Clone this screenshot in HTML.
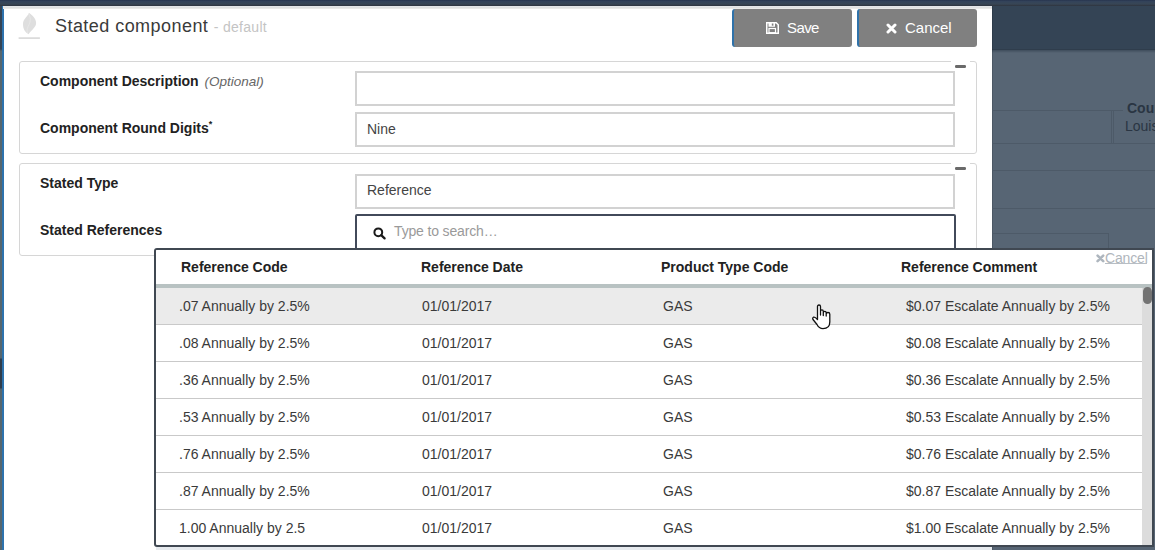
<!DOCTYPE html>
<html><head><meta charset="utf-8">
<style>
*{box-sizing:border-box;margin:0;padding:0}
html,body{width:1155px;height:550px;overflow:hidden}
body{position:relative;background:#576574;font-family:"Liberation Sans",sans-serif;color:#333}
.a{position:absolute}
/* background */
#topband{left:0;top:0;width:1155px;height:6px;background:linear-gradient(#27354f 0px,#33435a 1.5px,#384655 4px,#2e343e 6px)}
#bgdark{left:992px;top:6px;width:163px;height:44px;background:#344455}
#leftstrip{left:0;top:6px;width:2px;height:544px;background:linear-gradient(#344455 0px,#344455 43px,#56666e 45px,#56666e 352px,#2f3d4c 353px,#2f3d4c 382px,#56666e 383px)}
#bluestrip{left:2px;top:6px;width:2px;height:544px;background:#2d72ad}
#modal{left:4px;top:6px;width:988px;height:544px;background:#fff}
#modaltop{left:3px;top:6px;width:989px;height:3px;background:linear-gradient(#e6e9ec 0px,#dedede 2px,#f6f6f2 3px)}
.bgline{background:#4d5a68}
/* header */
#title{left:55px;top:15.5px;font-size:18px;color:#3a3a3a;white-space:nowrap;letter-spacing:0.45px}
#title small{font-size:14px;color:#c4c4c4;letter-spacing:0.3px}
.btn{top:9px;height:38px;background:#808080;border-radius:3px;border-left:2px solid #2f72aa;color:#fff;font-size:15px;text-align:center;line-height:38px;white-space:nowrap}
/* panels */
.panel{border:1px solid #d6d6d6;border-radius:3px;background:#fff}
.lbl{font-size:14px;font-weight:bold;color:#222;white-space:nowrap}
.inp{border:2px solid #d2d2d2;background:#fff;font-size:14px;color:#444;padding-left:10px;white-space:nowrap}
.minus{width:11px;height:2.5px;background:#6a6a6a;border-radius:1.2px}
/* dropdown */
#dd{left:154px;top:248px;width:1000px;height:299px;border:2px solid #404852;border-radius:3px 0 0 3px;background:#fff;overflow:hidden}
.th{font-size:14px;font-weight:bold;color:#222;white-space:nowrap;top:9px}
.row{left:0;width:986px;height:37px;border-bottom:1px solid #c9c9c9}
.td{font-size:14px;color:#3a3a3a;white-space:nowrap;top:10px}
</style></head><body>
<div class="a" id="topband"></div>
<div class="a" id="bgdark"></div>
<div class="a" id="leftstrip"></div>
<div class="a" id="bluestrip"></div>
<div class="a" id="modal"></div>
<div class="a" id="modaltop"></div>
<div class="a" style="left:992px;top:49px;width:163px;height:1px;background:#2f3d4c"></div>
<div class="a" style="left:992px;top:50px;width:163px;height:3px;background:linear-gradient(#3f4d5c,#576574)"></div>
<div class="a" style="left:992px;top:6px;width:1px;height:544px;background:rgba(0,0,0,0.12)"></div>

<!-- background lines on right -->
<div class="a bgline" style="left:992px;top:110px;width:131px;height:1px"></div>
<div class="a bgline" style="left:992px;top:143px;width:163px;height:1px"></div>
<div class="a bgline" style="left:1111px;top:110px;width:1px;height:33px"></div>
<div class="a bgline" style="left:1113px;top:110px;width:1px;height:33px"></div>
<div class="a bgline" style="left:992px;top:170px;width:163px;height:1px"></div>
<div class="a bgline" style="left:992px;top:208px;width:163px;height:1px"></div>
<div class="a bgline" style="left:992px;top:233px;width:116px;height:1px"></div>
<div class="a bgline" style="left:1108px;top:233px;width:1px;height:16px"></div>
<div class="a" style="left:1127px;top:100px;font-size:14px;font-weight:bold;color:#2a3543;white-space:nowrap">Country</div>
<div class="a" style="left:1125px;top:118px;font-size:14px;color:#2a3543;white-space:nowrap">Louisiana</div>

<!-- logo -->
<svg class="a" style="left:14px;top:8px" width="30" height="34" viewBox="0 0 30 34">
  <path d="M15.1 4.9C18 7 22 10 22.1 15C22.2 19 18 21.5 14.5 26.2C11 24 9 21 9 16C9 11 13 9 15.1 4.9Z" fill="#dedede"/>
  <path d="M14.5 5.5C15.5 8 17 10 16 14C15 18 12 20 13.5 25" fill="none" stroke="#e8e8e8" stroke-width="0.8"/>
  <rect x="4.6" y="29.3" width="21.3" height="1.6" fill="#d8d8d8"/>
</svg>

<div class="a" id="title">Stated component <small>- default</small></div>

<div class="a btn" style="left:732px;width:120px"></div>
<svg class="a" style="left:766px;top:22px" width="13" height="12" viewBox="0 0 13 12"><path d="M0.75 0.75H10.2L12.25 2.8V11.25H0.75Z" fill="none" stroke="#fff" stroke-width="1.5"/><rect x="2.5" y="0.75" width="6.5" height="4" fill="#fff"/><rect x="5.8" y="1.5" width="1.6" height="2.2" fill="#808080"/><rect x="3" y="6.5" width="6.5" height="4.2" fill="none" stroke="#fff" stroke-width="1.2"/></svg>
<div class="a" style="left:787px;top:19px;font-size:15px;color:#fff;white-space:nowrap;letter-spacing:-0.6px">Save</div>
<div class="a btn" style="left:857px;width:120px"></div>
<svg class="a" style="left:886px;top:23px" width="11" height="11" viewBox="0 0 11 11"><path d="M2 2L9 9M9 2L2 9" stroke="#fff" stroke-width="3" stroke-linecap="round"/></svg>
<div class="a" style="left:905px;top:19px;font-size:15px;color:#fff;white-space:nowrap">Cancel</div>

<!-- panel 1 -->
<div class="a panel" style="left:19px;top:61px;width:958px;height:93px"></div>
<div class="a" style="left:951px;top:60px;width:19px;height:3px;background:#fff"></div>
<div class="a minus" style="left:955px;top:65px"></div>
<div class="a lbl" style="left:40px;top:72.5px">Component Description <i style="font-weight:normal;font-size:13.5px;color:#666;margin-left:2px">(Optional)</i></div>
<div class="a lbl" style="left:40px;top:119px">Component Round Digits<sup style="font-size:9px">*</sup></div>
<div class="a inp" style="left:355px;top:71px;width:600px;height:35px"></div>
<div class="a inp" style="left:355px;top:112px;width:600px;height:35px;line-height:30px">Nine</div>

<!-- panel 2 -->
<div class="a panel" style="left:19px;top:163px;width:958px;height:93px"></div>
<div class="a" style="left:951px;top:162px;width:19px;height:3px;background:#fff"></div>
<div class="a minus" style="left:955px;top:167px"></div>
<div class="a lbl" style="left:40px;top:174.5px">Stated Type</div>
<div class="a lbl" style="left:40px;top:221.5px">Stated References</div>
<div class="a inp" style="left:355px;top:174px;width:600px;height:35px;line-height:29px">Reference</div>
<div class="a inp" style="left:355px;top:214px;width:601px;height:41px;border-color:#424a5a;border-radius:2px;color:#9a9a9a;padding-left:37px;line-height:30px;letter-spacing:-0.15px">Type to search&#8230;</div>
<svg class="a" style="left:373px;top:227px" width="14" height="14" viewBox="0 0 14 14"><circle cx="5.3" cy="5.3" r="3.9" fill="none" stroke="#1a1a1a" stroke-width="2"/><line x1="8.2" y1="8.2" x2="11.6" y2="11.4" stroke="#1a1a1a" stroke-width="2.3" stroke-linecap="round"/></svg>

<!-- bottom light band -->
<div class="a" style="left:156px;top:547px;width:836px;height:3px;background:#e6eaee"></div>

<!-- dropdown -->
<div class="a" id="dd">
  <div class="a" style="left:0;top:0;width:1000px;height:34px;background:#fff"></div>
  <div class="a th" style="left:25px">Reference Code</div>
  <div class="a th" style="left:265px">Reference Date</div>
  <div class="a th" style="left:505px">Product Type Code</div>
  <div class="a th" style="left:745px">Reference Comment</div>
  <svg class="a" style="left:940px;top:3.5px" width="9" height="9" viewBox="0 0 9 9"><path d="M1.6 1.6L7.2 7.2M7.2 1.6L1.6 7.2" stroke="#aeb6be" stroke-width="2.6" stroke-linecap="round"/></svg><div class="a" style="left:949px;top:-0.5px;font-size:14px;color:#b0b6bc;white-space:nowrap;letter-spacing:-0.15px">Cancel</div><div class="a" style="left:949px;top:13px;width:42px;height:1px;background:#b8bec4"></div>
  <div class="a" style="left:0;top:34px;width:998px;height:4px;background:#b8c2c2"></div>
  <div id="rows" class="a" style="left:0;top:38px;width:986px;height:300px">
    <div class="a row" style="top:0;background:#ebebeb"><div class="a td" style="left:23px">.07 Annually by 2.5%</div><div class="a td" style="left:266px">01/01/2017</div><div class="a td" style="left:507px">GAS</div><div class="a td" style="left:750px">$0.07 Escalate Annually by 2.5%</div></div>
    <div class="a row" style="top:37px"><div class="a td" style="left:23px">.08 Annually by 2.5%</div><div class="a td" style="left:266px">01/01/2017</div><div class="a td" style="left:507px">GAS</div><div class="a td" style="left:750px">$0.08 Escalate Annually by 2.5%</div></div>
    <div class="a row" style="top:74px"><div class="a td" style="left:23px">.36 Annually by 2.5%</div><div class="a td" style="left:266px">01/01/2017</div><div class="a td" style="left:507px">GAS</div><div class="a td" style="left:750px">$0.36 Escalate Annually by 2.5%</div></div>
    <div class="a row" style="top:111px"><div class="a td" style="left:23px">.53 Annually by 2.5%</div><div class="a td" style="left:266px">01/01/2017</div><div class="a td" style="left:507px">GAS</div><div class="a td" style="left:750px">$0.53 Escalate Annually by 2.5%</div></div>
    <div class="a row" style="top:148px"><div class="a td" style="left:23px">.76 Annually by 2.5%</div><div class="a td" style="left:266px">01/01/2017</div><div class="a td" style="left:507px">GAS</div><div class="a td" style="left:750px">$0.76 Escalate Annually by 2.5%</div></div>
    <div class="a row" style="top:185px"><div class="a td" style="left:23px">.87 Annually by 2.5%</div><div class="a td" style="left:266px">01/01/2017</div><div class="a td" style="left:507px">GAS</div><div class="a td" style="left:750px">$0.87 Escalate Annually by 2.5%</div></div>
    <div class="a row" style="top:222px;border-bottom:none"><div class="a td" style="left:23px">1.00 Annually by 2.5</div><div class="a td" style="left:266px">01/01/2017</div><div class="a td" style="left:507px">GAS</div><div class="a td" style="left:750px">$1.00 Escalate Annually by 2.5%</div></div>
  </div>
  <!-- scrollbar -->
  <div class="a" style="left:986px;top:38px;width:10px;height:260px;background:#dcdcdc"></div>
  <div class="a" style="left:987px;top:37px;width:9px;height:17px;background:#737373;border-radius:5px"></div>
</div>

<!-- cursor -->
<svg class="a" style="left:812px;top:303px" width="20" height="28" viewBox="0 0 20 28">
  <path d="M5.5 16.5L5.5 3.6Q5.5 2 7 2Q8.5 2 8.5 3.6L8.5 12L8.5 8.4Q8.5 6.9 9.9 6.9Q11.3 6.9 11.3 8.4L11.3 12.5L11.3 9.8Q11.3 8.4 12.75 8.4Q14.2 8.4 14.2 9.8L14.2 13L14.2 11Q14.2 9.5 16 9.5Q17.8 9.5 17.8 11.2L17.8 19Q17.8 25.6 11 25.6Q7 25.6 5 21.5L1 16.5Q0.2 15 1.5 14.2Q3 13.6 5.5 16.5Z" fill="#fff" stroke="#111" stroke-width="1.3" stroke-linejoin="round"/>
</svg>
</body></html>
